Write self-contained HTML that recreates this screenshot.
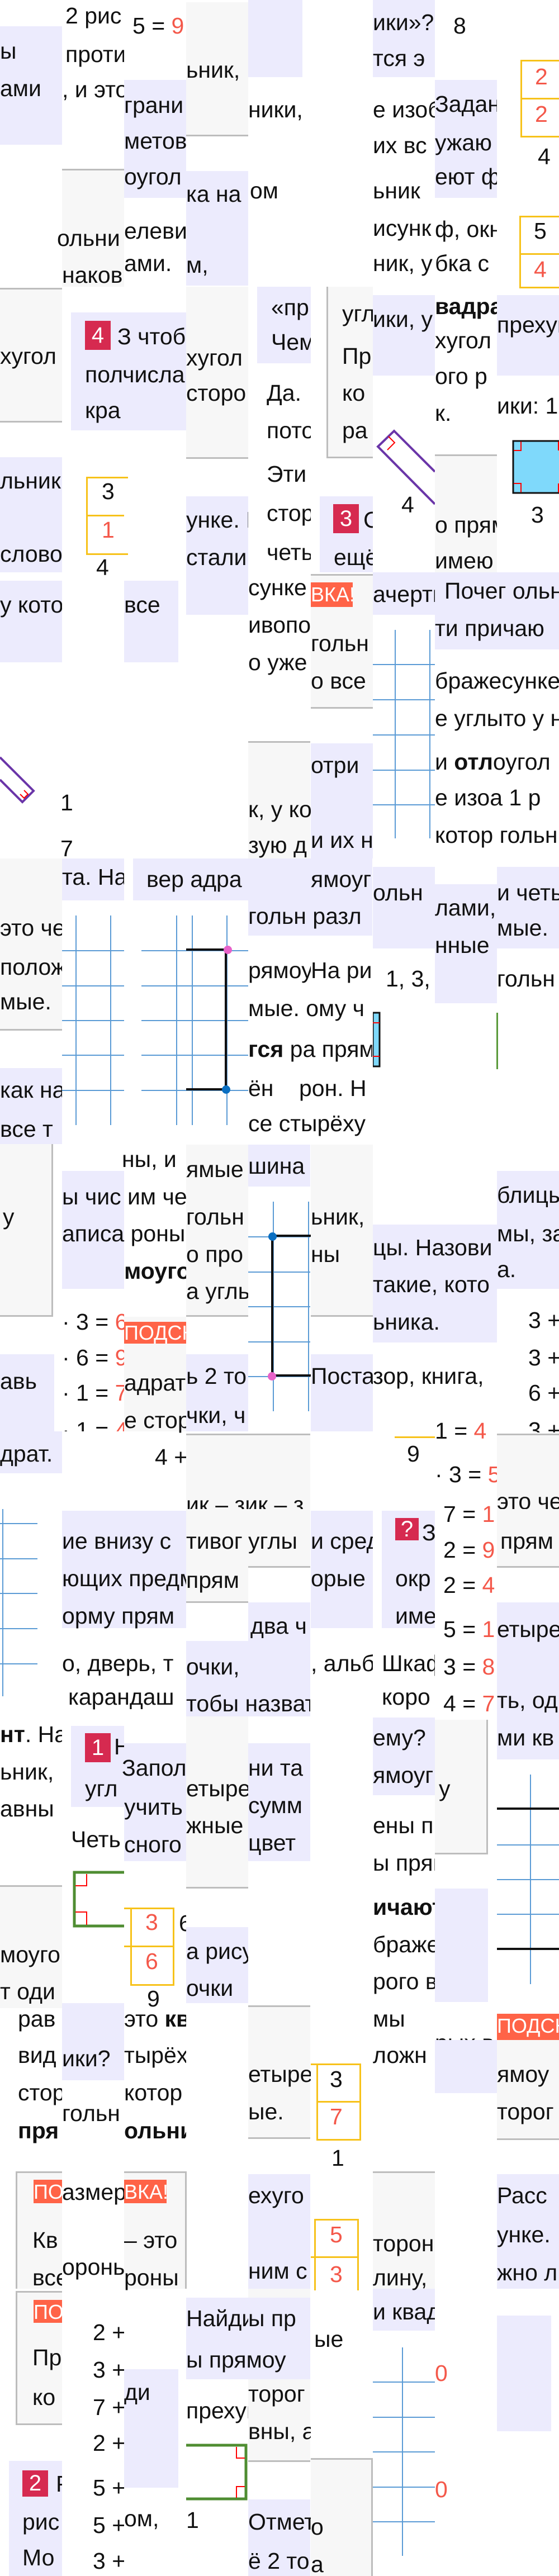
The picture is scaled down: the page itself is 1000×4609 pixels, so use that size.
<!DOCTYPE html>
<html><head><meta charset="utf-8">
<style>
*{margin:0;padding:0;box-sizing:border-box}
html,body{width:1000px;height:4609px;background:#fff;overflow:hidden}
body{position:relative;font-family:"Liberation Sans","DejaVu Sans",sans-serif;color:#111}
div{position:absolute}
.l{background:#ecebfd}
.g{background:#f7f7f7}
.bb{border-bottom:3px solid #bdbdbd}
.bt{border-top:3px solid #bdbdbd}
.t{font-size:41px;line-height:1;white-space:nowrap;overflow:hidden;height:48px}
.b{font-weight:bold}
.r{color:#f4584a}
.bd{background:#d62a50;color:#fff;font-size:40px;line-height:52px;text-align:center;width:46px;height:52px}
.c{background:#ff6347;color:#fff;font-size:36px;line-height:44px;white-space:nowrap;overflow:hidden;height:44px}
.y{border:3px solid #f7c21a}
.hl{height:2px;background:#5b9bd5}
.vl{width:2px;background:#5b9bd5}
.k{background:#111}
</style></head><body>

<div class="l" style="left:0;top:47px;width:111px;height:212px"></div>
<div class="g bb" style="left:333px;top:4px;width:111px;height:240px"></div>
<div class="l" style="left:444px;top:0;width:97px;height:138px"></div>
<div class="l" style="left:667px;top:0;width:111px;height:138px"></div>
<div class="l" style="left:778px;top:143px;width:111px;height:211px"></div>
<div class="l" style="left:222px;top:143px;width:111px;height:211px"></div>
<div class="g bt" style="left:111px;top:302px;width:111px;height:211px"></div>
<div class="l" style="left:333px;top:306px;width:111px;height:205px"></div>
<div class="g bt bb" style="left:0;top:515px;width:111px;height:241px"></div>
<div class="l" style="left:127px;top:559px;width:206px;height:211px"></div>
<div class="g bb" style="left:333px;top:513px;width:111px;height:308px"></div>
<div class="l" style="left:460px;top:513px;width:96px;height:137px"></div>
<div class="g bb" style="left:584px;top:513px;width:83px;height:307px;border-left:3px solid #bdbdbd"></div>
<div class="l" style="left:667px;top:528px;width:111px;height:144px"></div>
<div class="l" style="left:889px;top:528px;width:111px;height:144px"></div>

<div class="l" style="left:0;top:818px;width:111px;height:206px"></div>
<div class="l" style="left:0;top:1039px;width:111px;height:146px"></div>
<div class="l" style="left:222px;top:1039px;width:97px;height:146px"></div>
<div class="l" style="left:333px;top:888px;width:111px;height:212px"></div>
<div class="l" style="left:572px;top:888px;width:95px;height:136px"></div>
<div class="g bt bb" style="left:556px;top:1027px;width:111px;height:241px"></div>
<div class="l" style="left:667px;top:1024px;width:111px;height:76px"></div>
<div class="g" style="left:778px;top:813px;width:111px;height:211px;border-top:3px solid #bdbdbd"></div>
<div class="l" style="left:778px;top:1024px;width:222px;height:138px"></div>
<div class="g bt" style="left:444px;top:1326px;width:111px;height:210px"></div>
<div class="l" style="left:556px;top:1330px;width:111px;height:206px"></div>

<div class="g bb" style="left:0;top:1536px;width:111px;height:308px"></div>
<div class="l" style="left:111px;top:1536px;width:111px;height:75px"></div>
<div class="l" style="left:238px;top:1536px;width:206px;height:75px"></div>
<div class="l" style="left:444px;top:1536px;width:222px;height:138px"></div>
<div class="l" style="left:667px;top:1551px;width:111px;height:146px"></div>
<div class="l" style="left:778px;top:1582px;width:111px;height:213px"></div>
<div class="l" style="left:889px;top:1551px;width:111px;height:146px"></div>

<div class="l" style="left:0;top:1911px;width:111px;height:136px"></div>
<div class="g" style="left:0;top:2047px;width:95px;height:309px;border-right:3px solid #bdbdbd;border-bottom:3px solid #bdbdbd"></div>
<div class="l" style="left:111px;top:2095px;width:111px;height:211px"></div>
<div class="g bb" style="left:333px;top:2048px;width:111px;height:308px"></div>
<div class="l" style="left:444px;top:2048px;width:111px;height:75px"></div>
<div class="g bb" style="left:556px;top:2048px;width:111px;height:308px"></div>
<div class="l" style="left:667px;top:2191px;width:222px;height:211px"></div>
<div class="l" style="left:889px;top:2095px;width:111px;height:211px"></div>
<div class="g" style="left:222px;top:2356px;width:111px;height:205px"></div>
<div class="l" style="left:333px;top:2423px;width:111px;height:138px"></div>
<div class="l" style="left:556px;top:2423px;width:111px;height:138px"></div>
<div class="l" style="left:0;top:2423px;width:97px;height:138px"></div>
<div class="l" style="left:0;top:2561px;width:111px;height:75px"></div>
<div class="g bt" style="left:333px;top:2565px;width:222px;height:135px"></div>
<div class="g bt" style="left:889px;top:2565px;width:111px;height:135px"></div>

<div class="l" style="left:111px;top:2703px;width:222px;height:210px"></div>
<div class="g bb" style="left:333px;top:2700px;width:111px;height:168px"></div>
<div class="g bb" style="left:444px;top:2700px;width:111px;height:105px"></div>
<div class="l" style="left:556px;top:2703px;width:111px;height:210px"></div>
<div class="l" style="left:683px;top:2703px;width:95px;height:210px"></div>
<div class="g bb" style="left:889px;top:2700px;width:111px;height:105px"></div>
<div class="l" style="left:889px;top:2867px;width:111px;height:281px"></div>
<div class="l" style="left:444px;top:2867px;width:111px;height:204px"></div>
<div class="l" style="left:333px;top:2936px;width:222px;height:135px"></div>
<div class="l" style="left:127px;top:3088px;width:95px;height:145px"></div>
<div class="l" style="left:222px;top:3119px;width:111px;height:211px"></div>
<div class="g bb" style="left:333px;top:3071px;width:111px;height:308px"></div>
<div class="l" style="left:444px;top:3119px;width:111px;height:211px"></div>
<div class="l" style="left:667px;top:3073px;width:111px;height:139px"></div>
<div class="g" style="left:778px;top:3077px;width:95px;height:241px;border:3px solid #bdbdbd;border-left:none;border-top:none"></div>
<div class="l" style="left:778px;top:3379px;width:95px;height:203px"></div>
<div class="g bt" style="left:0;top:3373px;width:111px;height:220px"></div>
<div class="l" style="left:333px;top:3448px;width:111px;height:136px"></div>
<div class="l" style="left:111px;top:3584px;width:111px;height:138px"></div>
<div class="g bb" style="left:444px;top:3588px;width:111px;height:239px;border-top:3px solid #bdbdbd"></div>
<div class="c" style="left:889px;top:3603px;width:111px;height:47px">ПОДСКАЗ</div>

<div class="l" style="left:778px;top:3650px;width:111px;height:95px"></div>
<div class="g bb" style="left:889px;top:3650px;width:111px;height:179px"></div>
<div class="g" style="left:28px;top:3885px;width:306px;height:210px;border:3px solid #bdbdbd;border-bottom:none"></div>
<div style="left:111px;top:3885px;width:111px;height:210px;background:#fff"></div>
<div class="l" style="left:444px;top:3890px;width:111px;height:205px"></div>
<div class="g bt" style="left:667px;top:3885px;width:111px;height:210px"></div>
<div class="l" style="left:889px;top:3890px;width:111px;height:205px"></div>
<div class="g" style="left:28px;top:4099px;width:83px;height:240px;border:3px solid #bdbdbd;border-right:none"></div>
<div class="l" style="left:222px;top:4239px;width:97px;height:212px"></div>
<div class="l" style="left:333px;top:4111px;width:111px;height:146px"></div>
<div class="g bb" style="left:444px;top:4095px;width:111px;height:310px"></div>
<div class="l" style="left:444px;top:4111px;width:111px;height:146px"></div>
<div class="l" style="left:444px;top:4472px;width:111px;height:137px"></div>
<div class="g" style="left:556px;top:4398px;width:111px;height:211px;border-top:3px solid #bdbdbd;border-right:3px solid #bdbdbd"></div>
<div class="l" style="left:667px;top:4095px;width:111px;height:75px"></div>
<div class="l" style="left:889px;top:4143px;width:97px;height:207px"></div>
<div class="l" style="left:16px;top:4403px;width:95px;height:206px"></div>

<div class="y" style="left:931px;top:107px;width:75px;height:139px"></div>
<div style="left:931px;top:175px;width:69px;height:3px;background:#f7c21a"></div>
<div class="y" style="left:929px;top:386px;width:77px;height:130px"></div>
<div style="left:929px;top:453px;width:71px;height:3px;background:#f7c21a"></div>
<div class="y" style="left:154px;top:853px;width:75px;height:140px;border-right:none"></div>
<div style="left:154px;top:921px;width:68px;height:3px;background:#f7c21a"></div>
<div class="y" style="left:233px;top:3413px;width:79px;height:140px"></div>
<div style="left:222px;top:3413px;width:11px;height:3px;background:#f7c21a"></div>
<div style="left:222px;top:3481px;width:90px;height:3px;background:#f7c21a"></div>
<div class="y" style="left:566px;top:3692px;width:80px;height:138px"></div>
<div style="left:556px;top:3692px;width:10px;height:3px;background:#f7c21a"></div>
<div style="left:566px;top:3759px;width:80px;height:3px;background:#f7c21a"></div>
<div class="y" style="left:562px;top:3970px;width:80px;height:128px;border-bottom:none"></div>
<div style="left:556px;top:4037px;width:86px;height:3px;background:#f7c21a"></div>
<div style="left:706px;top:2570px;width:72px;height:3px;background:#f7c21a"></div>

<svg style="position:absolute;left:660px;top:768px" width="118" height="150"><polyline points="118,76 45,3 16,31 118,134" fill="none" stroke="#6a35a8" stroke-width="4"/><polyline points="35,13 46,24 33,37" fill="none" stroke="red" stroke-width="2"/></svg>
<svg style="position:absolute;left:0;top:1345px" width="80" height="120"><polyline points="0,10 60,70 40,90 0,50" fill="none" stroke="#6a35a8" stroke-width="4"/><polyline points="43,69 50,76 43,83 36,76" fill="none" stroke="red" stroke-width="2"/></svg>
<svg style="position:absolute;left:915px;top:786px" width="85" height="100"><rect x="3" y="3" width="90" height="93" fill="#7fd9fb" stroke="#111" stroke-width="3"/><polyline points="4,20 17,20 17,4" fill="none" stroke="red" stroke-width="2"/><polyline points="4,79 17,79 17,95" fill="none" stroke="red" stroke-width="2"/><polyline points="84,4 84,20" fill="none" stroke="red" stroke-width="2"/><polyline points="84,95 84,79" fill="none" stroke="red" stroke-width="2"/></svg>
<svg style="position:absolute;left:667px;top:1810px" width="16" height="100"><rect x="0" y="2" width="12" height="96" fill="#7fd9fb" stroke="#111" stroke-width="3"/><line x1="0" y1="20" x2="12" y2="20" stroke="red" stroke-width="2"/><line x1="0" y1="80" x2="12" y2="80" stroke="red" stroke-width="2"/></svg>
<div style="left:888px;top:1812px;width:3px;height:101px;background:#5a9a3a"></div>
<svg style="position:absolute;left:128px;top:3346px" width="94" height="105"><polyline points="94,4 5,4 5,100 94,100" fill="none" stroke="#4f8d32" stroke-width="5"/><polyline points="7,28 27,28 27,7" fill="none" stroke="red" stroke-width="2"/><polyline points="7,75 27,75 27,98" fill="none" stroke="red" stroke-width="2"/></svg>
<svg style="position:absolute;left:333px;top:4371px" width="111" height="104"><polyline points="0,4 107,4 107,100 0,100" fill="none" stroke="#4f8d32" stroke-width="5"/><polyline points="105,27 90,27 90,7" fill="none" stroke="red" stroke-width="2"/><polyline points="105,78 90,78 90,98" fill="none" stroke="red" stroke-width="2"/></svg>

<div class="vl" style="left:706px;top:1127px;height:373px"></div>
<div class="vl" style="left:768px;top:1127px;height:373px"></div>
<div class="hl" style="left:667px;top:1188px;width:111px"></div>
<div class="hl" style="left:667px;top:1251px;width:111px"></div>
<div class="hl" style="left:667px;top:1314px;width:111px"></div>
<div class="hl" style="left:667px;top:1377px;width:111px"></div>
<div class="hl" style="left:667px;top:1439px;width:111px"></div>
<div class="vl" style="left:135px;top:1638px;height:375px"></div>
<div class="vl" style="left:197px;top:1638px;height:375px"></div>
<div class="vl" style="left:315px;top:1638px;height:375px"></div>
<div class="vl" style="left:343px;top:1638px;height:375px"></div>
<div class="vl" style="left:405px;top:1638px;height:375px"></div>
<div class="hl" style="left:111px;top:1700px;width:111px"></div>
<div class="hl" style="left:111px;top:1763px;width:111px"></div>
<div class="hl" style="left:111px;top:1825px;width:111px"></div>
<div class="hl" style="left:111px;top:1887px;width:111px"></div>
<div class="hl" style="left:111px;top:1950px;width:111px"></div>
<div class="hl" style="left:253px;top:1700px;width:191px"></div>
<div class="hl" style="left:253px;top:1763px;width:191px"></div>
<div class="hl" style="left:253px;top:1825px;width:191px"></div>
<div class="hl" style="left:253px;top:1887px;width:191px"></div>
<div class="hl" style="left:253px;top:1950px;width:191px"></div>
<div class="k" style="left:333px;top:1697px;width:73px;height:4px"></div>
<div class="k" style="left:333px;top:1947px;width:73px;height:4px"></div>
<div class="k" style="left:402px;top:1697px;width:4px;height:254px"></div>
<div style="left:400px;top:1692px;width:15px;height:15px;border-radius:50%;background:#e761c9"></div>
<div style="left:397px;top:1942px;width:15px;height:15px;border-radius:50%;background:#0a6fc2"></div>
<div class="vl" style="left:488px;top:2150px;height:375px"></div>
<div class="vl" style="left:551px;top:2150px;height:375px"></div>
<div class="hl" style="left:444px;top:2212px;width:111px"></div>
<div class="hl" style="left:444px;top:2275px;width:111px"></div>
<div class="hl" style="left:444px;top:2337px;width:111px"></div>
<div class="hl" style="left:444px;top:2400px;width:111px"></div>
<div class="hl" style="left:444px;top:2462px;width:111px"></div>
<div class="k" style="left:485px;top:2209px;width:71px;height:4px"></div>
<div class="k" style="left:485px;top:2459px;width:71px;height:4px"></div>
<div class="k" style="left:485px;top:2209px;width:4px;height:254px"></div>
<div style="left:480px;top:2205px;width:15px;height:15px;border-radius:50%;background:#0a6fc2"></div>
<div style="left:479px;top:2455px;width:15px;height:15px;border-radius:50%;background:#e761c9"></div>
<div class="vl" style="left:4px;top:2700px;height:335px"></div>
<div class="hl" style="left:0;top:2725px;width:67px"></div>
<div class="hl" style="left:0;top:2788px;width:67px"></div>
<div class="hl" style="left:0;top:2850px;width:67px"></div>
<div class="hl" style="left:0;top:2913px;width:67px"></div>
<div class="hl" style="left:0;top:2976px;width:67px"></div>
<div class="vl" style="left:948px;top:3175px;height:375px"></div>
<div class="k" style="left:889px;top:3234px;width:111px;height:4px"></div>
<div class="hl" style="left:889px;top:3300px;width:111px"></div>
<div class="hl" style="left:889px;top:3362px;width:111px"></div>
<div class="hl" style="left:889px;top:3424px;width:111px"></div>
<div class="k" style="left:889px;top:3485px;width:111px;height:4px"></div>
<div class="vl" style="left:719px;top:4200px;height:373px"></div>
<div class="hl" style="left:667px;top:4261px;width:111px"></div>
<div class="hl" style="left:667px;top:4324px;width:111px"></div>
<div class="hl" style="left:667px;top:4386px;width:111px"></div>
<div class="hl" style="left:667px;top:4449px;width:111px"></div>
<div class="hl" style="left:667px;top:4511px;width:111px"></div>

<div class="bd" style="left:152px;top:574px">4</div>
<div class="bd" style="left:596px;top:902px">3</div>
<div class="bd" style="left:707px;top:2716px;width:42px;height:40px;line-height:40px">?</div>
<div class="bd" style="left:152px;top:3101px">1</div>
<div class="bd" style="left:40px;top:4420px;height:47px;line-height:47px">2</div>
<div class="c" style="left:556px;top:1042px;width:75px">ВКА!</div>
<div class="c" style="left:222px;top:2365px;width:111px;height:39px;line-height:39px">ПОДСКАЗ</div>
<div class="c" style="left:60px;top:3900px;width:51px;height:42px">ПО</div>
<div class="c" style="left:222px;top:3900px;width:76px;height:42px">ВКА!</div>
<div class="c" style="left:60px;top:4115px;width:51px;height:41px">ПО</div>

<div class="t" style="left:0;top:71px;width:111px">ы</div>
<div class="t" style="left:0;top:138px;width:111px">ами</div>
<div class="t" style="left:117px;top:8px;width:105px">2 рис</div>
<div class="t" style="left:117px;top:77px;width:105px">проти</div>
<div class="t" style="left:111px;top:140px;width:111px">, и это</div>
<div class="t" style="left:237px;top:26px;width:96px">5 = <span class="r">9</span></div>
<div class="t" style="left:333px;top:105px;width:111px">ьник,</div>
<div class="t" style="left:444px;top:176px;width:111px">ники,</div>
<div class="t" style="left:447px;top:321px;width:111px">ом</div>
<div class="t" style="left:667px;top:20px;width:111px">ики»?</div>
<div class="t" style="left:667px;top:84px;width:111px">тся э</div>
<div class="t" style="left:667px;top:176px;width:111px">е изоб</div>
<div class="t" style="left:667px;top:240px;width:111px">их вс</div>
<div class="t" style="left:667px;top:321px;width:111px">ьник</div>
<div class="t" style="left:667px;top:388px;width:111px">исунк</div>
<div class="t" style="left:667px;top:451px;width:111px">ник, у</div>
<div class="t" style="left:811px;top:26px;width:60px">8</div>
<div class="t" style="left:778px;top:166px;width:111px">Задан</div>
<div class="t" style="left:778px;top:235px;width:111px">ужаю</div>
<div class="t" style="left:778px;top:296px;width:111px">еют ф</div>
<div class="t" style="left:778px;top:390px;width:111px">ф, окн</div>
<div class="t" style="left:778px;top:451px;width:111px">бка с</div>
<div class="t r" style="left:957px;top:117px;width:40px">2</div>
<div class="t r" style="left:957px;top:184px;width:40px">2</div>
<div class="t" style="left:962px;top:260px;width:40px">4</div>
<div class="t" style="left:955px;top:393px;width:40px">5</div>
<div class="t r" style="left:955px;top:462px;width:40px">4</div>
<div class="t" style="left:222px;top:168px;width:111px">грани</div>
<div class="t" style="left:222px;top:232px;width:111px">метов</div>
<div class="t" style="left:222px;top:296px;width:111px">оугол</div>
<div class="t" style="left:102px;top:406px;width:120px">ольни</div>
<div class="t" style="left:111px;top:472px;width:111px">наков</div>
<div class="t" style="left:222px;top:393px;width:111px">елеви</div>
<div class="t" style="left:222px;top:451px;width:111px">ами.</div>
<div class="t" style="left:333px;top:327px;width:111px">ка на</div>
<div class="t" style="left:333px;top:454px;width:111px">м,</div>
<div class="t" style="left:0;top:617px;width:111px">хугол</div>
<div class="t" style="left:210px;top:582px;width:123px">З чтоб</div>
<div class="t" style="left:152px;top:650px;width:181px">полчисла</div>
<div class="t" style="left:152px;top:714px;width:181px">кра</div>
<div class="t" style="left:333px;top:620px;width:111px">хугол</div>
<div class="t" style="left:333px;top:683px;width:111px">сторо</div>
<div class="t" style="left:485px;top:530px;width:71px">«пр</div>
<div class="t" style="left:485px;top:592px;width:71px">Чем</div>
<div class="t" style="left:477px;top:683px;width:79px">Да.</div>
<div class="t" style="left:477px;top:750px;width:79px">пото</div>
<div class="t" style="left:612px;top:541px;width:55px">угл</div>
<div class="t" style="left:612px;top:617px;width:55px">Пр</div>
<div class="t" style="left:612px;top:683px;width:55px">ко</div>
<div class="t" style="left:612px;top:750px;width:55px">ра</div>
<div class="t" style="left:667px;top:551px;width:111px">ики, у</div>
<div class="t b" style="left:778px;top:528px;width:111px">вадра</div>
<div class="t" style="left:778px;top:589px;width:111px">хугол</div>
<div class="t" style="left:778px;top:653px;width:111px">ого р</div>
<div class="t" style="left:778px;top:719px;width:111px">к.</div>
<div class="t" style="left:889px;top:561px;width:111px">прехуг</div>
<div class="t" style="left:889px;top:706px;width:111px">ики: 1</div>

<div class="t" style="left:0;top:840px;width:111px">льник</div>
<div class="t" style="left:0;top:971px;width:111px">слово</div>
<div class="t" style="left:0;top:1062px;width:111px">у кото</div>
<div class="t" style="left:182px;top:859px;width:40px">3</div>
<div class="t r" style="left:182px;top:928px;width:40px">1</div>
<div class="t" style="left:172px;top:995px;width:40px">4</div>
<div class="t" style="left:222px;top:1062px;width:97px">все</div>
<div class="t" style="left:333px;top:910px;width:111px">унке. Н</div>
<div class="t" style="left:333px;top:977px;width:111px">стали</div>
<div class="t" style="left:477px;top:828px;width:79px">Эти</div>
<div class="t" style="left:477px;top:898px;width:79px">стор</div>
<div class="t" style="left:477px;top:968px;width:79px">четь</div>
<div class="t" style="left:444px;top:1031px;width:112px">сунке</div>
<div class="t" style="left:444px;top:1098px;width:112px">ивопо</div>
<div class="t" style="left:444px;top:1165px;width:112px">о уже</div>
<div class="t" style="left:650px;top:910px;width:17px">С</div>
<div class="t" style="left:597px;top:977px;width:70px">ещё</div>
<div class="t" style="left:556px;top:1131px;width:111px">гольн</div>
<div class="t" style="left:556px;top:1198px;width:111px">о все</div>
<div class="t" style="left:718px;top:883px;width:40px">4</div>
<div class="t" style="left:667px;top:1043px;width:111px">ачерти</div>
<div class="t" style="left:778px;top:919px;width:111px">о прям</div>
<div class="t" style="left:778px;top:983px;width:111px">имею</div>
<div class="t" style="left:950px;top:901px;width:40px">3</div>
<div class="t" style="left:795px;top:1037px;width:205px">Почег ольн</div>
<div class="t" style="left:778px;top:1104px;width:222px">ти причаю</div>
<div class="t" style="left:778px;top:1198px;width:222px">бражесунке</div>
<div class="t" style="left:778px;top:1265px;width:222px">е углыто у н</div>
<div class="t" style="left:778px;top:1343px;width:222px">и <b>отл</b>оугол</div>
<div class="t" style="left:778px;top:1407px;width:222px">е изоа 1 р</div>
<div class="t" style="left:778px;top:1474px;width:222px">котор гольн</div>
<div class="t" style="left:108px;top:1416px;width:40px">1</div>
<div class="t" style="left:108px;top:1498px;width:40px">7</div>
<div class="t" style="left:556px;top:1349px;width:111px">отри</div>
<div class="t" style="left:444px;top:1428px;width:112px">к, у ко</div>
<div class="t" style="left:444px;top:1492px;width:112px">зую д</div>
<div class="t" style="left:556px;top:1483px;width:111px">и их н</div>
<div class="t" style="left:111px;top:1549px;width:111px">та. На</div>
<div class="t" style="left:262px;top:1553px;width:182px">вер адра</div>
<div class="t" style="left:556px;top:1553px;width:111px">ямоуг</div>
<div class="t" style="left:444px;top:1619px;width:222px">гольн разл</div>
<div class="t" style="left:667px;top:1577px;width:111px">ольн</div>
<div class="t" style="left:778px;top:1604px;width:111px">лами,</div>
<div class="t" style="left:778px;top:1671px;width:111px">нные</div>
<div class="t" style="left:889px;top:1577px;width:111px">и четь</div>
<div class="t" style="left:889px;top:1640px;width:111px">мые.</div>
<div class="t" style="left:0;top:1640px;width:111px">это че</div>
<div class="t" style="left:0;top:1710px;width:111px">полож</div>
<div class="t" style="left:444px;top:1716px;width:112px">рямоу</div>
<div class="t" style="left:556px;top:1716px;width:111px">На ри</div>
<div class="t" style="left:690px;top:1731px;width:88px">1, 3, 4.</div>
<div class="t" style="left:889px;top:1731px;width:111px">гольн</div>

<div class="t" style="left:0;top:1772px;width:111px">мые.</div>
<div class="t" style="left:0;top:1930px;width:111px">как на</div>
<div class="t" style="left:0;top:2000px;width:111px">все т</div>
<div class="t" style="left:444px;top:1784px;width:222px">мые. ому ч</div>
<div class="t" style="left:444px;top:1857px;width:222px"><b>гся</b> ра прям</div>
<div class="t" style="left:444px;top:1927px;width:222px">ён&nbsp;&nbsp;&nbsp;&nbsp;рон. Н</div>
<div class="t" style="left:444px;top:1990px;width:222px">се стырёху</div>
<div class="t" style="left:5px;top:2157px;width:90px">у</div>
<div class="t" style="left:218px;top:2054px;width:115px">ны, и</div>
<div class="t" style="left:111px;top:2121px;width:222px">ы чис им че</div>
<div class="t" style="left:111px;top:2187px;width:222px">аписа роны</div>
<div class="t b" style="left:222px;top:2254px;width:111px">моуго</div>
<div class="t" style="left:333px;top:2072px;width:111px">ямые</div>
<div class="t" style="left:333px;top:2157px;width:111px">гольн</div>
<div class="t" style="left:333px;top:2224px;width:111px">о про</div>
<div class="t" style="left:333px;top:2290px;width:111px">а угль</div>
<div class="t" style="left:444px;top:2066px;width:111px">шина</div>
<div class="t" style="left:556px;top:2157px;width:111px">ьник,</div>
<div class="t" style="left:556px;top:2224px;width:111px">ны</div>
<div class="t" style="left:667px;top:2212px;width:222px">цы. Назови</div>
<div class="t" style="left:667px;top:2278px;width:222px">такие, кото</div>
<div class="t" style="left:667px;top:2345px;width:222px">ьника.</div>
<div class="t" style="left:889px;top:2118px;width:111px">блицы</div>
<div class="t" style="left:889px;top:2187px;width:111px">мы, за</div>
<div class="t" style="left:889px;top:2251px;width:111px">а.</div>
<div class="t" style="left:111px;top:2345px;width:111px">· 3 = <span class="r">6</span></div>
<div class="t" style="left:111px;top:2409px;width:111px">· 6 = <span class="r">9</span></div>
<div class="t" style="left:111px;top:2472px;width:111px">· 1 = <span class="r">7</span></div>
<div class="t" style="left:111px;top:2539px;width:111px;height:22px">· 1 = <span class="r">4</span></div>
<div class="t" style="left:222px;top:2454px;width:111px">адрат</div>
<div class="t" style="left:222px;top:2521px;width:111px">е стор</div>
<div class="t" style="left:333px;top:2442px;width:111px">ь 2 то</div>
<div class="t" style="left:333px;top:2512px;width:111px">чки, ч</div>
<div class="t" style="left:556px;top:2442px;width:111px">Поста</div>
<div class="t" style="left:667px;top:2442px;width:222px">зор, книга,</div>
<div class="t" style="left:945px;top:2342px;width:55px">3 +</div>
<div class="t" style="left:945px;top:2409px;width:55px">3 +</div>
<div class="t" style="left:945px;top:2472px;width:55px">6 +</div>
<div class="t" style="left:945px;top:2539px;width:55px;height:24px">3 +</div>
<div class="t" style="left:0;top:2451px;width:97px">авь</div>
<div class="t" style="left:0;top:2581px;width:111px">драт.</div>
<div class="t" style="left:277px;top:2587px;width:56px">4 +</div>
<div class="t" style="left:333px;top:2672px;width:222px;height:28px">ик – зик – з</div>
<div class="t" style="left:778px;top:2540px;width:111px">1 = <span class="r">4</span></div>
<div class="t" style="left:728px;top:2581px;width:40px">9</div>
<div class="t" style="left:778px;top:2618px;width:111px">· 3 = <span class="r">5</span></div>
<div class="t" style="left:889px;top:2666px;width:111px;height:34px">это че</div>

<div class="t" style="left:793px;top:2689px;width:96px">7 = <span class="r">1</span></div>
<div class="t" style="left:111px;top:2737px;width:222px">ие внизу с</div>
<div class="t" style="left:111px;top:2804px;width:222px">ющих предм</div>
<div class="t" style="left:111px;top:2871px;width:222px">орму прям</div>
<div class="t" style="left:333px;top:2737px;width:111px">тивог</div>
<div class="t" style="left:333px;top:2807px;width:111px">прям</div>
<div class="t" style="left:444px;top:2737px;width:112px">углы</div>
<div class="t" style="left:556px;top:2737px;width:111px">и сред</div>
<div class="t" style="left:556px;top:2804px;width:111px">орые</div>
<div class="t" style="left:755px;top:2722px;width:23px">З</div>
<div class="t" style="left:707px;top:2804px;width:71px">окр</div>
<div class="t" style="left:707px;top:2871px;width:71px">име</div>
<div class="t" style="left:793px;top:2753px;width:96px">2 = <span class="r">9</span></div>
<div class="t" style="left:793px;top:2816px;width:96px">2 = <span class="r">4</span></div>
<div class="t" style="left:793px;top:2895px;width:96px">5 = <span class="r">1</span></div>
<div class="t" style="left:793px;top:2962px;width:96px">3 = <span class="r">8</span></div>
<div class="t" style="left:793px;top:3028px;width:96px">4 = <span class="r">7</span></div>
<div class="t" style="left:895px;top:2737px;width:105px">прям</div>
<div class="t" style="left:889px;top:2895px;width:111px">етыре</div>
<div class="t" style="left:889px;top:3022px;width:111px">ть, од</div>
<div class="t" style="left:889px;top:3089px;width:111px">ми кв</div>
<div class="t" style="left:448px;top:2889px;width:107px">два ч</div>
<div class="t" style="left:333px;top:2962px;width:222px">очки,</div>
<div class="t" style="left:333px;top:3028px;width:222px">тобы назват</div>
<div class="t" style="left:111px;top:2956px;width:222px">о, дверь, т</div>
<div class="t" style="left:122px;top:3016px;width:211px">карандаш</div>
<div class="t" style="left:556px;top:2956px;width:111px">, альб</div>
<div class="t" style="left:683px;top:2956px;width:95px">Шкаф</div>
<div class="t" style="left:683px;top:3016px;width:95px">коро</div>
<div class="t" style="left:0;top:3083px;width:111px"><b>нт</b>. На</div>
<div class="t" style="left:0;top:3150px;width:111px">ьник,</div>
<div class="t" style="left:0;top:3216px;width:111px">авны</div>
<div class="t" style="left:204px;top:3105px;width:18px">Н</div>
<div class="t" style="left:152px;top:3180px;width:70px">угл</div>
<div class="t" style="left:127px;top:3271px;width:95px">Четь</div>
<div class="t" style="left:218px;top:3143px;width:115px">Запол</div>
<div class="t" style="left:222px;top:3213px;width:111px">учить</div>
<div class="t" style="left:222px;top:3280px;width:111px">сного</div>
<div class="t" style="left:333px;top:3180px;width:111px">етыре</div>
<div class="t" style="left:333px;top:3246px;width:111px">жные</div>
<div class="t" style="left:444px;top:3143px;width:112px">ни та</div>
<div class="t" style="left:444px;top:3210px;width:112px">сумм</div>
<div class="t" style="left:444px;top:3277px;width:112px">цвет</div>
<div class="t" style="left:667px;top:3089px;width:111px">ему?</div>
<div class="t" style="left:667px;top:3156px;width:111px">ямоуг</div>
<div class="t" style="left:667px;top:3246px;width:111px">ены пр</div>
<div class="t" style="left:667px;top:3313px;width:111px">ы прям</div>
<div class="t b" style="left:667px;top:3392px;width:111px">ичают</div>
<div class="t" style="left:667px;top:3459px;width:111px">браже</div>
<div class="t" style="left:667px;top:3525px;width:111px">рого в</div>
<div class="t" style="left:667px;top:3592px;width:111px">мы</div>
<div class="t" style="left:785px;top:3180px;width:80px">у</div>
<div class="t" style="left:0;top:3477px;width:111px">моуго</div>
<div class="t" style="left:0;top:3543px;width:111px">т оди</div>
<div class="t" style="left:32px;top:3592px;width:79px">рав</div>
<div class="t r" style="left:260px;top:3419px;width:40px">3</div>
<div class="t r" style="left:260px;top:3489px;width:40px">6</div>
<div class="t" style="left:263px;top:3556px;width:40px">9</div>
<div class="t" style="left:320px;top:3421px;width:13px">6</div>
<div class="t" style="left:333px;top:3471px;width:111px">а рису</div>
<div class="t" style="left:333px;top:3537px;width:111px">очки</div>
<div class="t" style="left:222px;top:3592px;width:111px">это <b>кв</b></div>
<div class="t" style="left:778px;top:3635px;width:111px;height:15px">рых в</div>

<div class="t" style="left:32px;top:3657px;width:79px">вид</div>
<div class="t" style="left:32px;top:3724px;width:79px">стор</div>
<div class="t b" style="left:32px;top:3792px;width:79px">пря</div>
<div class="t" style="left:111px;top:3663px;width:111px">ики?</div>
<div class="t" style="left:111px;top:3761px;width:111px">гольн</div>
<div class="t" style="left:222px;top:3657px;width:111px">тырёх</div>
<div class="t" style="left:222px;top:3724px;width:111px">котор</div>
<div class="t b" style="left:222px;top:3792px;width:111px">ольни</div>
<div class="t" style="left:444px;top:3691px;width:112px">етыре</div>
<div class="t" style="left:444px;top:3758px;width:112px">ые.</div>
<div class="t" style="left:590px;top:3700px;width:40px">3</div>
<div class="t r" style="left:590px;top:3767px;width:40px">7</div>
<div class="t" style="left:593px;top:3841px;width:40px">1</div>
<div class="t" style="left:667px;top:3657px;width:111px">ложн</div>
<div class="t" style="left:889px;top:3691px;width:111px">ямоу</div>
<div class="t" style="left:889px;top:3758px;width:111px">торог</div>
<div class="t" style="left:111px;top:3902px;width:111px">азмер</div>
<div class="t" style="left:58px;top:3988px;width:53px">Кв</div>
<div class="t" style="left:58px;top:4055px;width:53px">все</div>
<div class="t" style="left:111px;top:4036px;width:111px">оронь</div>
<div class="t" style="left:222px;top:3988px;width:111px">– это</div>
<div class="t" style="left:222px;top:4055px;width:111px">роны</div>
<div class="t" style="left:444px;top:3908px;width:112px">ехуго</div>
<div class="t" style="left:444px;top:4043px;width:112px">ним с</div>
<div class="t r" style="left:590px;top:3978px;width:40px">5</div>
<div class="t r" style="left:590px;top:4049px;width:40px">3</div>
<div class="t" style="left:667px;top:3994px;width:111px">торон</div>
<div class="t" style="left:667px;top:4055px;width:111px">лину,</div>
<div class="t" style="left:889px;top:3908px;width:111px">Расс</div>
<div class="t" style="left:889px;top:3978px;width:111px">унке.</div>
<div class="t" style="left:889px;top:4046px;width:111px">жно л</div>
<div class="t" style="left:58px;top:4198px;width:53px">Пр</div>
<div class="t" style="left:58px;top:4269px;width:53px">ко</div>
<div class="t" style="left:166px;top:4153px;width:56px">2 +</div>
<div class="t" style="left:166px;top:4220px;width:56px">3 +</div>
<div class="t" style="left:166px;top:4287px;width:56px">7 +</div>
<div class="t" style="left:166px;top:4351px;width:56px">2 +</div>
<div class="t" style="left:166px;top:4431px;width:56px">5 +</div>
<div class="t" style="left:166px;top:4498px;width:56px">5 +</div>
<div class="t" style="left:166px;top:4562px;width:56px">3 +</div>
<div class="t" style="left:222px;top:4260px;width:97px">ди</div>
<div class="t" style="left:222px;top:4486px;width:111px">ом,</div>
<div class="t" style="left:333px;top:4128px;width:111px">Найди</div>
<div class="t" style="left:333px;top:4202px;width:222px">ы прямоу</div>
<div class="t" style="left:333px;top:4293px;width:111px">прехуг</div>
<div class="t" style="left:444px;top:4128px;width:112px">ы пр</div>
<div class="t" style="left:562px;top:4165px;width:105px">ые</div>
<div class="t" style="left:444px;top:4263px;width:112px">торог</div>
<div class="t" style="left:444px;top:4330px;width:112px">вны, а</div>
<div class="t" style="left:333px;top:4489px;width:60px">1</div>
<div class="t" style="left:444px;top:4492px;width:112px">Отмет</div>
<div class="t" style="left:444px;top:4562px;width:112px">ё 2 то</div>
<div class="t" style="left:556px;top:4501px;width:111px">о</div>
<div class="t" style="left:556px;top:4568px;width:111px">а</div>
<div class="t" style="left:667px;top:4116px;width:111px">и квад</div>
<div class="t r" style="left:778px;top:4226px;width:40px">0</div>
<div class="t r" style="left:778px;top:4434px;width:40px">0</div>
<div class="t" style="left:100px;top:4424px;width:11px">Р</div>
<div class="t" style="left:40px;top:4492px;width:71px">рис</div>
<div class="t" style="left:40px;top:4556px;width:71px">Мо</div>

</body></html>
